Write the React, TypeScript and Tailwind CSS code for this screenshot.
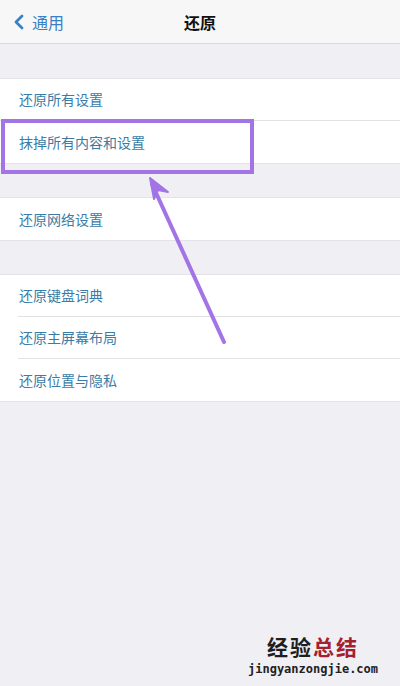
import { ChevronLeft } from 'lucide-react';

const GROUPS = [
  ['还原所有设置', '抹掉所有内容和设置'],
  ['还原网络设置'],
  ['还原键盘词典', '还原主屏幕布局', '还原位置与隐私'],
];

const FONT = { fontFamily: '"Noto Sans CJK SC", "Noto Sans", sans-serif' };

export default function App() {
  return (
    <div className="relative h-[686px] w-[400px] overflow-hidden bg-[#efeff4]" style={FONT}>
      {/* Nav bar */}
      <div className="relative flex h-[44px] items-center border-b border-[#d8d8dc] bg-[#f7f7f7]">
        <div className="flex items-center pl-[7px] text-[#3b80c4]">
          <ChevronLeft className="h-[28px] w-[24px]" strokeWidth={2.8} />
          <span className="ml-[1px] text-[16px]">通用</span>
        </div>
        <div className="absolute inset-x-0 text-center text-[16px] font-bold text-[#111]">还原</div>
      </div>

      {/* settings groups */}
      <div className="flex flex-col gap-[33px] pt-[34px]">
        {GROUPS.map((g, gi) => (
          <div key={gi} className="border-y border-[#e4e4e8] bg-white">
            {g.map((label, i) => (
              <div key={label} className="flex h-[42px] items-stretch">
                <div
                  className={`flex flex-1 items-center text-[14px] text-[#3a7ca6] ${
                    i === g.length - 1
                      ? 'pl-[19px]'
                      : gi === 2
                        ? 'ml-[18px] border-b border-[#e2e2e6] pl-px'
                        : 'border-b border-[#e2e2e6] pl-[19px]'
                  }`}
                >
                  {label}
                </div>
              </div>
            ))}
          </div>
        ))}
      </div>

      {/* highlight box */}
      <div className="absolute left-[1px] top-[119px] h-[55px] w-[253px] border-[4px] border-[#a374e6]" />

      {/* arrow */}
      <svg className="absolute left-0 top-0" width="400" height="686" viewBox="0 0 400 686">
        <line x1="224" y1="342" x2="152" y2="184" stroke="#a374e6" strokeWidth="4" strokeLinecap="round" />
        <path d="M150 178 L168 192 L158 190 L154 199 Z" fill="#a374e6" stroke="#a374e6" strokeWidth="2" strokeLinejoin="round" />
      </svg>

      {/* watermark */}
      <div className="absolute left-[248px] top-[634px] flex w-[130px] flex-col items-center">
        <div className="text-[21px] font-bold leading-[24px] tracking-[2px]">
          <span className="text-[#1e1e1e]">经验</span>
          <span className="text-[#a3202e]">总结</span>
        </div>
        <div
          className="mt-[4px] text-[12px] font-bold leading-[14px] text-[#222]"
          style={{ fontFamily: '"DejaVu Sans Mono", monospace' }}
        >
          jingyanzongjie.com
        </div>
      </div>
    </div>
  );
}
